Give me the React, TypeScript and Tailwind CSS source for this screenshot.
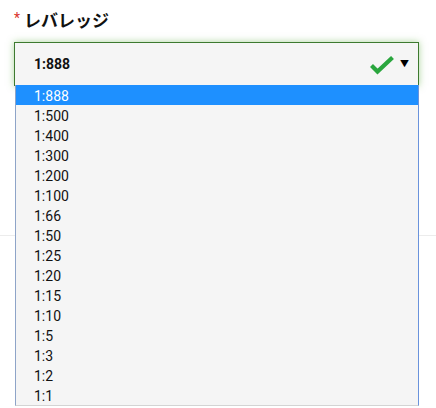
import React, { useState } from 'react';

const options = [
  '1:888', '1:500', '1:400', '1:300', '1:200', '1:100', '1:66', '1:50',
  '1:25', '1:20', '1:15', '1:10', '1:5', '1:3', '1:2', '1:1',
];

// Green success check beside the select value
const CheckIcon = () => (
  <svg width="26" height="20" viewBox="0 0 26 20" className="block">
    <path d="M2.5 10.5 L8.5 16.5 L23.5 2.5" fill="none" stroke="#2aa63e" strokeWidth="4.2" strokeLinecap="butt" strokeLinejoin="miter" />
  </svg>
);

const App: React.FC = () => {
  const [value] = useState<string>('1:888');

  return (
    <div className="relative h-[408px] w-[436px] overflow-hidden bg-white font-['Roboto','Noto_Sans_CJK_JP',sans-serif]">
      {/* content behind the open dropdown */}
      <div className="absolute left-0 right-0 top-[235px] h-px bg-[#ececec]" />

      <div className="pl-[14px] pr-[17px] pt-[8px]">
        {/* Label */}
        <div className="flex items-center h-[22px]">
          <span className="text-[14px] text-[#d9332b] leading-none mr-[4px] -mt-[2px]">*</span>
          <span className="text-[17px] font-bold text-[#111] font-['Noto_Sans_CJK_JP',sans-serif] leading-none">レバレッジ</span>
        </div>

        {/* Select */}
        <div className="relative mt-[12px]">
          <div className="flex items-center h-[44px] border border-[#3d7a2f] bg-[#f5f5f5] shadow-[0_0_7px_rgba(90,170,60,0.5)] pl-[19px] pr-[9px]">
            <span className="text-[14px] font-bold text-[#111] flex-1 pt-[1px]">{value}</span>
            <div className="mt-[1px] mr-[5px]">
              <CheckIcon />
            </div>
            <span className="text-[9px] text-black leading-none mt-[1px]">▼</span>
          </div>

          {/* Open dropdown list */}
          <ul className="absolute left-px right-0 top-[43px] z-10 bg-[#f5f5f5] border-l border-l-[#8ea4c8] border-r border-r-[#6a93dc] border-b border-b-[#d4d4d4]">
            {options.map((opt) => (
              <li
                key={opt}
                className={
                  opt === value
                    ? 'h-[20px] flex items-center pl-[18px] pt-[3px] text-[14px] bg-[#1e90ff] text-white'
                    : 'h-[20px] flex items-center pl-[18px] pt-[3px] text-[14px] text-[#111]'
                }
              >
                {opt}
              </li>
            ))}
          </ul>
        </div>
      </div>
    </div>
  );
};

export default App;
